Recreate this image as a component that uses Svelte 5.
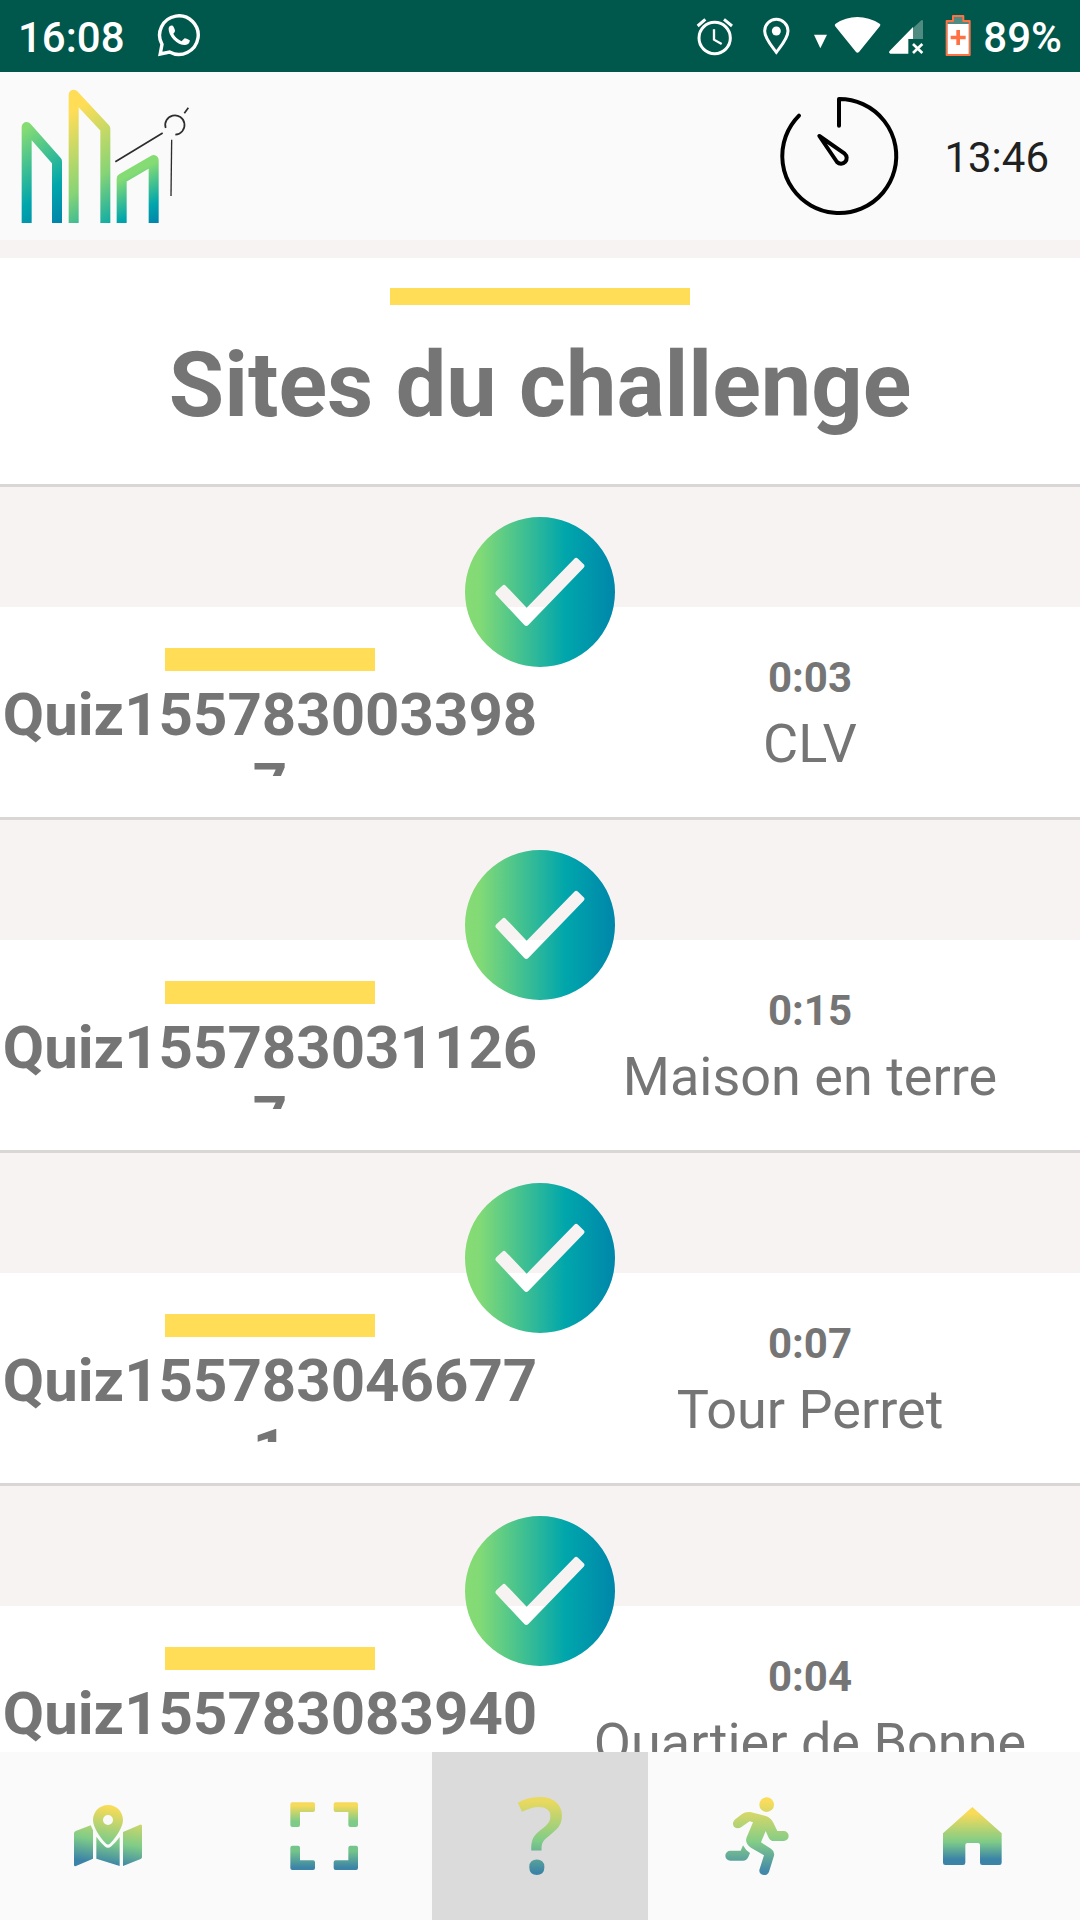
<script>
  const sites = [
    { quiz: 'Quiz1557830033987', time: '0:03', place: 'CLV' },
    { quiz: 'Quiz1557830311267', time: '0:15', place: 'Maison en terre' },
    { quiz: 'Quiz1557830466771', time: '0:07', place: 'Tour Perret' },
    { quiz: 'Quiz155783083940', time: '0:04', place: 'Quartier de Bonne' }
  ];
</script>

<div class="app">
  <div class="status">
    <span class="clock">16:08</span>
    <svg class="whatsapp" viewBox="0 0 46 46" aria-hidden="true">
      <path d="M6 31.4 4.2 41 13.6 39A19.3 19.3 0 1 0 6 31.4Z" fill="none" stroke="#fff" stroke-width="3.4" />
      <path d="M12.6 15.5Q13 12.5 16 12.6 17.5 12.7 19 17.5 19.3 19 17.3 20.8 20 26 25.5 28.2L28.3 25.4Q29 24.6 33.8 27.3 34 31.5 29 32 23 32 17.5 26.5 12.5 21 12.6 15.5Z" fill="#fff" />
    </svg>
    <div class="indicators">
      <svg class="alarm" viewBox="48 48 114 120" aria-hidden="true">
        <g fill="none" stroke="#fff" stroke-width="9">
          <circle cx="104" cy="114" r="47" />
          <path d="M53 78 76 58M132 58 156 78" />
          <path d="M102 88V119L125 132" stroke-width="7" />
        </g>
      </svg>
      <svg class="pin" viewBox="246 48 90 120" aria-hidden="true">
        <path d="M289 157C275 138 254 115 254 93A35 35 0 0 1 324 93C324 115 303 138 289 157Z" fill="none" stroke="#fff" stroke-width="9" />
        <circle cx="289" cy="93" r="13.500" fill="#fff" />
      </svg>
      <div class="network">
        <svg class="small" viewBox="399 48 42 120" aria-hidden="true"><path d="M402 104H441L421 145Z" fill="#fff" /></svg>
        <svg class="wifi" viewBox="462 48 141 120" aria-hidden="true">
          <path d="M465 78Q463 74 467 71 497 51 532 51T599 71Q603 74 600 78L537 156Q532 161 528 156Z" fill="#fff" />
        </svg>
        <svg class="signal" viewBox="624 48 108 120" aria-hidden="true">
          <path d="M699 84 724 61Q729 58 729 64V117H699Z" fill="#4f8b80" />
          <path d="M699 81V117H685V161H631Q625 159 628 154Z" fill="#fff" />
          <path d="M699 132 727 159M727 132 699 159" stroke="#fff" stroke-width="8" />
        </svg>
      </div>
      <svg class="battery" viewBox="792 42 84 132" aria-hidden="true">
        <path d="M800 63H819V48H850V63H869V165H800Z" fill="#4f8b80" stroke="#ff7043" stroke-width="6" stroke-linejoin="round" />
        <path d="M803 72H866V162H803Z" fill="#fff" />
        <path d="M834.500 90V135M812 112.500H857" stroke="#ff7043" stroke-width="11" />
      </svg>
      <span class="clock">89%</span>
    </div>
  </div>

  <header>
    <svg class="logo" viewBox="60 54 510 408" role="img" aria-label="Logo">
      <defs>
        <linearGradient id="b1" gradientUnits="userSpaceOnUse" x1="80" y1="171" x2="240" y2="413">
          <stop offset="0" stop-color="#86dc74" /><stop offset=".67" stop-color="#00a6ac" /><stop offset="1" stop-color="#0086aa" />
        </linearGradient>
        <linearGradient id="b2" gradientUnits="userSpaceOnUse" x1="221" y1="74" x2="441" y2="408">
          <stop offset=".1" stop-color="#ffdd57" /><stop offset=".62" stop-color="#86d476" /><stop offset="1" stop-color="#00a6ac" />
        </linearGradient>
        <linearGradient id="b3" gradientUnits="userSpaceOnUse" x1="365" y1="326" x2="439" y2="473">
          <stop offset="0" stop-color="#86dc74" /><stop offset=".67" stop-color="#00a6ac" /><stop offset="1" stop-color="#0086aa" />
        </linearGradient>
      </defs>
      <g fill="none" stroke-width="30" stroke-linejoin="round">
        <path d="M80 459V171L171 274V459" stroke="url(#b1)" />
        <path d="M221 459V74L316 176V459" stroke="url(#b2)" />
        <path d="M365 459V326L461 270V459" stroke="url(#b3)" />
      </g>
      <g fill="none" stroke="#2d2d2d" stroke-width="5">
        <path d="M497 174A29 29 0 1 1 526 194" />
        <path d="M346 275 488 189M553 130 565 113" />
        <path d="M515 209 513 378" stroke-width="4" />
      </g>
    </svg>
    <div class="timer">
      <svg class="dial" viewBox="291 282 372 372" aria-hidden="true">
        <g fill="none" stroke="#000" stroke-width="12" stroke-linecap="round" stroke-linejoin="round">
          <path d="M357 347A171 171 0 1 0 477 297V377" />
          <path d="M418 408 494 461A17 17 0 1 1 471 486Z" />
        </g>
      </svg>
      <time>13:46</time>
    </div>
  </header>

  <main>
    <section class="title">
      <div class="bar"></div>
      <h1>Sites du challenge</h1>
    </section>

    {#each sites as site, i}
      <article>
        <svg class="check" viewBox="75 51 450 450" role="img" aria-label="Terminé">
          <defs>
            <linearGradient id={'c' + i}>
              <stop offset="0" stop-color="#86dc74" /><stop offset=".1" stop-color="#82da76" /><stop offset=".67" stop-color="#00a6ac" /><stop offset="1" stop-color="#0086aa" />
            </linearGradient>
          </defs>
          <path fill={`url(#c${i})`} fill-rule="evenodd" d="M75 276A225 225 0 1 1 525 276A225 225 0 1 1 75 276ZM187 257 169 274Q164 279 168 284L253 375Q259 381 265 375L431 203Q436 198 431 193L414 176Q408 171 403 176L260 323 197 257Q192 252 187 257Z" />
        </svg>
        <div class="body">
          <div class="quiz">
            <div class="bar"></div>
            <h2>{site.quiz}</h2>
          </div>
          <div class="result">
            <strong>{site.time}</strong>
            <p>{site.place}</p>
          </div>
        </div>
      </article>
    {/each}
  </main>

  <nav>
    <a href="#carte" aria-label="Carte">
      <svg viewBox="18 42 252 252">
        <defs>
          <linearGradient id="n1" gradientUnits="userSpaceOnUse" x1="144" y1="80" x2="116" y2="250">
            <stop offset="0" stop-color="#f8dc58" /><stop offset=".6" stop-color="#7fcc88" /><stop offset="1" stop-color="#3b83a7" />
          </linearGradient>
        </defs>
        <path fill="url(#n1)" fill-rule="evenodd" d="M144 75C169 75 189 95 189 120 189 140 170 170 151 190Q144 197 137 190C118 170 99 140 99 120 99 95 119 75 144 75ZM144 105A15 15 0 1 0 144 135 15 15 0 1 0 144 105ZM42 160Q42 155 47 153L92 136 99 151V236L48 258Q42 260 42 254ZM109 170Q122 188 134 199 144 208 154 199 167 188 179 171V258L109 236ZM189 156 240 134Q246 132 246 138V231Q246 235 242 237L189 258Z" />
      </svg>
    </a>
    <a href="#scanner" aria-label="Scanner">
      <svg viewBox="666 42 252 252">
        <defs>
          <linearGradient id="n2" gradientUnits="userSpaceOnUse" x1="0" y1="67" x2="0" y2="270">
            <stop offset=".05" stop-color="#f6da5a" /><stop offset=".28" stop-color="#7fcc88" /><stop offset=".72" stop-color="#74c48b" /><stop offset=".97" stop-color="#3b83a7" />
          </linearGradient>
        </defs>
        <path fill="url(#n2)" d="M697 67H759Q765 67 765 73V90Q765 96 759 96H720V135Q720 141 714 141H697Q691 141 691 135V73Q691 67 697 67ZM888 67H827Q821 67 821 73V90Q821 96 827 96H865V135Q865 141 871 141H888Q894 141 894 135V73Q894 67 888 67ZM697 270H759Q765 270 765 264V247Q765 241 759 241H720V203Q720 197 714 197H697Q691 197 691 203V264Q691 270 697 270ZM888 270H827Q821 270 821 264V247Q821 241 827 241H865V203Q865 197 871 197H888Q894 197 894 203V264Q894 270 888 270Z" />
      </svg>
    </a>
    <a class="active" href="#quiz" aria-label="Quiz" aria-current="page">
      <svg viewBox="-6 42 252 252">
        <defs>
          <linearGradient id="n3" gradientUnits="userSpaceOnUse" x1="0" y1="51" x2="0" y2="285">
            <stop offset=".05" stop-color="#ead95f" /><stop offset=".57" stop-color="#7fcc88" /><stop offset=".97" stop-color="#3b83a7" />
          </linearGradient>
        </defs>
        <text class="mark" x="122" y="281" text-anchor="middle" fill="url(#n3)">?</text>
      </svg>
    </a>
    <a href="#parcours" aria-label="Parcours">
      <svg viewBox="642 42 252 252">
        <defs>
          <linearGradient id="n4" gradientUnits="userSpaceOnUse" x1="0" y1="51" x2="0" y2="285">
            <stop offset=".05" stop-color="#fadc5a" /><stop offset=".57" stop-color="#84cd87" /><stop offset=".95" stop-color="#4389aa" />
          </linearGradient>
        </defs>
        <g fill="url(#n4)">
          <circle cx="800" cy="74" r="22" />
          <path d="M704 119 725 103Q736 94 751 96L795 107Q812 112 820 128L832 153H851A15 15 0 0 1 851 183H822Q811 183 806 173L797 153 783 187 813 206Q825 214 822 227L807 275Q803 286 791 285 777 283 778 270L792 226 754 204Q733 190 740 172L759 127 749 124 723 142Q712 148 702 140 695 130 704 119Z" />
          <path d="M691 212H722L729 196Q736 210 750 219L745 231Q740 242 729 242H691A15 15 0 0 1 691 212Z" />
        </g>
      </svg>
    </a>
    <a href="#accueil" aria-label="Accueil">
      <svg viewBox="1290 42 252 252">
        <defs>
          <linearGradient id="n5" gradientUnits="userSpaceOnUse" x1="0" y1="81" x2="0" y2="255">
            <stop offset=".1" stop-color="#fadb58" /><stop offset=".6" stop-color="#7fcc88" /><stop offset=".9" stop-color="#3b83a7" />
          </linearGradient>
        </defs>
        <path fill="url(#n5)" d="M1417 81 1505 160V248Q1505 255 1498 255H1447Q1440 255 1440 248V195Q1440 189 1434 189H1402Q1396 189 1396 195V248Q1396 255 1389 255H1336Q1329 255 1329 248V160Z" />
      </svg>
    </a>
  </nav>
</div>

<style>
  :global(body) {
    background: #f7f3f2;
  }
  .app {
    display: flex;
    flex-direction: column;
    height: 100vh;
    font-family: Roboto, sans-serif;
    color: #757575;
    background: #f7f3f2;
  }
  svg {
    display: block;
    flex: none;
  }
  h1, h2, p {
    margin: 0;
  }

  .status {
    display: flex;
    align-items: center;
    flex: none;
    height: 72px;
    padding: 0 18px;
    background: #00574b;
    color: #fff;
  }
  .clock, time {
    padding-top: 4px;
    font-size: 42px;
    line-height: 50px;
  }
  .clock {
    font-weight: 500;
  }
  .whatsapp {
    width: 46px;
    height: 46px;
    margin-left: 31px;
  }
  .indicators {
    display: flex;
    align-items: center;
    margin-left: auto;
  }
  .alarm, .pin, .small, .wifi, .signal {
    height: 40px;
  }
  .alarm {
    width: 38px;
    margin-right: 28px;
  }
  .pin {
    width: 30px;
  }
  .network {
    display: flex;
    gap: 7px;
    margin: 0 20px 0 21px;
  }
  .small {
    width: 14px;
  }
  .wifi {
    width: 47px;
  }
  .signal {
    width: 36px;
  }
  .battery {
    width: 28px;
    height: 44px;
    margin-right: 11px;
  }

  header {
    display: flex;
    align-items: center;
    justify-content: space-between;
    flex: none;
    height: 168px;
    padding: 0 31px 0 20px;
    background: #fafafa;
  }
  .logo {
    width: 170px;
    height: 136px;
  }
  .timer {
    display: flex;
    align-items: center;
    gap: 43px;
    color: #212121;
  }
  .dial {
    width: 124px;
    height: 124px;
  }

  main {
    flex: 1;
    min-height: 0;
    padding-top: 18px;
    overflow-y: auto;
    scrollbar-width: none;
  }
  .bar {
    margin: 0 auto;
    background: #ffdd57;
  }
  .title {
    padding: 30px 0 43px;
    background: #fff;
    border-bottom: 3px solid #d9d6d5;
    text-align: center;
  }
  .title .bar {
    width: 300px;
    height: 17px;
  }
  h1 {
    padding-top: 26px;
    font-size: 90px;
    line-height: 110px;
    font-weight: 700;
  }

  article {
    position: relative;
    padding-top: 120px;
    border-bottom: 3px solid #d9d6d5;
  }
  .check {
    position: absolute;
    top: 30px;
    left: calc(50% - 75px);
    width: 150px;
    height: 150px;
  }
  .body {
    display: grid;
    grid-template-columns: 1fr 1fr;
    padding: 41px 0 37px;
    background: #fff;
    text-align: center;
  }
  .quiz .bar {
    width: 210px;
    height: 23px;
  }
  h2 {
    height: 96px;
    margin-top: 9px;
    overflow: hidden;
    overflow-wrap: anywhere;
    font-size: 60px;
    line-height: 70px;
    font-weight: 700;
  }
  .result strong {
    display: block;
    font-size: 42px;
    line-height: 60px;
  }
  .result p {
    font-size: 54px;
    line-height: 72px;
  }

  nav {
    display: grid;
    grid-template-columns: repeat(5, 1fr);
    flex: none;
    height: 168px;
    background: #fafafa;
  }
  nav a {
    display: flex;
    align-items: center;
    justify-content: center;
    text-decoration: none;
  }
  nav .active {
    background: #dbdbdb;
  }
  nav svg {
    width: 84px;
    height: 84px;
    overflow: visible;
  }
  .mark {
    font-family: "Open Sans", sans-serif;
    font-size: 316px;
    font-weight: 600;
  }
</style>
